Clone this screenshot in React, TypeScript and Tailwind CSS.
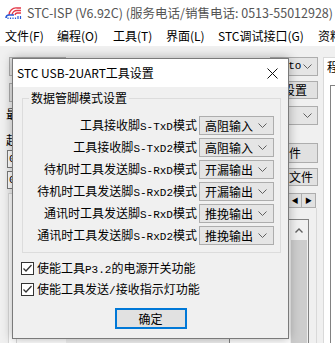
import React from "react";

const cjk = "font-['Noto_Sans_CJK_SC',sans-serif]";
const mono = "font-['Liberation_Mono',monospace] text-[11px]";

const rows = [
  { a: "工具接收脚", b: "S-TxD", c: "模式", v: "高阻输入" },
  { a: "工具接收脚", b: "S-TxD2", c: "模式", v: "高阻输入" },
  { a: "待机时工具发送脚", b: "S-RxD", c: "模式", v: "开漏输出" },
  { a: "待机时工具发送脚", b: "S-RxD2", c: "模式", v: "开漏输出" },
  { a: "通讯时工具发送脚", b: "S-RxD", c: "模式", v: "推挽输出" },
  { a: "通讯时工具发送脚", b: "S-RxD2", c: "模式", v: "推挽输出" },
];

const menus = [
  { t: "文件(F)", w: "w-[52px]" },
  { t: "编程(O)", w: "w-[56px]" },
  { t: "工具(T)", w: "w-[53px]" },
  { t: "界面(L)", w: "w-[52px]" },
  { t: "STC调试接口(G)", w: "w-[100px]" },
  { t: "资料", w: "w-[40px]" },
];

const Chevron = () => (
  <svg width="9" height="6" viewBox="0 0 9 6" className="shrink-0">
    <polyline points="0.5,0.5 4.5,4.5 8.5,0.5" fill="none" stroke="#606060" strokeWidth="1" />
  </svg>
);

const Check = () => (
  <div className="flex h-[13px] w-[13px] shrink-0 items-center justify-center border border-[#333] bg-white">
    <svg width="11" height="11" viewBox="0 0 11 11">
      <polyline points="1.5,5.5 4,8 9.5,2" fill="none" stroke="#333" strokeWidth="1.3" />
    </svg>
  </div>
);

const Logo = () => (
  <svg width="18" height="14" viewBox="0 0 18 14">
    <path d="M4 9 A7 7 0 0 1 12 2" fill="none" stroke="#e43a4a" strokeWidth="1.4" />
    <path d="M7 9 A5 5 0 0 1 12 4.5" fill="none" stroke="#e43a4a" strokeWidth="1.4" />
    <path d="M10 9 A2.5 2.5 0 0 1 12 7" fill="none" stroke="#e43a4a" strokeWidth="1.4" />
    <path d="M12 2 L16 2 M12 4.5 L16 4.5 M12 7 L16 7" stroke="#e43a4a" strokeWidth="1.4" />
    <path d="M1 12 Q1 9 4 9 L9 9" fill="none" stroke="#2a5bd7" strokeWidth="1.6" />
    <path d="M3 13 L3 11.5 M5.5 13 L5.5 11.5 M8 13 L8 11.5 M10.5 13 L10.5 11.5 M13 13 L13 10 M15.5 13 L15.5 10" stroke="#2a5bd7" strokeWidth="1.2" />
  </svg>
);

const MainCombo = ({ text, w }: { text?: string; w: string }) => (
  <div className={`flex h-[19px] ${w} items-center justify-between border border-[#adadad] bg-[#e5e5e5] pl-[4px] pr-[5px] text-[12px]`}>
    <span className={mono}>{text}</span>
    <Chevron />
  </div>
);

const Btn = ({ text, w, h }: { text: string; w: string; h: string }) => (
  <div className={`flex ${h} ${w} items-center justify-center border border-[#adadad] bg-[#e1e1e1] text-[12px]`}>
    {text}
  </div>
);

export default function App() {
  return (
    <div className={`relative h-[343px] w-[335px] overflow-hidden bg-[#f0f0f0] text-black ${cjk}`}>
      {/* main window title */}
      <div className="flex h-[26px] items-center whitespace-nowrap bg-white pl-[5px]">
        <Logo />
        <span className="ml-[4px] text-[12.5px] text-[#555]">
          STC-ISP (V6.92C) (服务电话/销售电话: 0513-55012928)
        </span>
      </div>
      {/* menu bar */}
      <div className="flex h-[20px] items-center whitespace-nowrap bg-white pl-[5px] text-[12px]">
        {menus.map((m) => (
          <span key={m.t} className={`${m.w} shrink-0`}>
            {m.t}
          </span>
        ))}
      </div>

      {/* client area */}
      <div className="flex h-[297px] pt-[11px]">
        <div className="ml-[6px] flex w-[60px] shrink-0 flex-col text-[12px]">
          <div className="ml-[3px]">
            <MainCombo w="w-[57px]" />
          </div>
          <div className="ml-[3px] mt-[7px]">
            <MainCombo w="w-[57px]" />
          </div>
          <div className="mt-[4px] h-[16px] leading-[16px]">最低波特率</div>
          <div className="mt-[10px] h-[16px] leading-[16px]">起始地址</div>
          <div className={`ml-[1px] mt-[2px] flex h-[18px] items-center border border-[#7a7a7a] bg-white pl-[1px] ${mono}`}>0x0000</div>
          <div className={`ml-[1px] mt-[3px] flex h-[18px] items-center border border-[#7a7a7a] bg-white pl-[1px] ${mono}`}>0x0000</div>
          <div className="ml-[2px] mt-[4px] flex flex-1 flex-col border-l border-t border-[#d9d9d9] bg-white pl-[7px]">
            <div className="mt-[8px] flex-1 border-l border-[#d9d9d9]">
              <div className="mt-[138px] flex items-center gap-[4px] pl-[3px]">
                <div className="h-[13px] w-[13px] shrink-0 border border-[#333] bg-white" />
                <span>在下次冷启动时</span>
              </div>
            </div>
          </div>
        </div>

        <div className="flex-1" />

        {/* right column */}
        <div className="flex w-[106px] shrink-0 flex-col items-end">
          <MainCombo text="Auto" w="w-[48px]" />
          <div className="mt-[5px]">
            <Btn text="设置" w="w-[46px]" h="h-[18px]" />
          </div>
          <div className="mt-[7px]">
            <MainCombo w="w-[48px]" />
          </div>
          <div className="mt-[18px]">
            <Btn text="打开程序文件" w="w-[106px]" h="h-[20px]" />
          </div>
          <div className="mt-[5px]">
            <Btn text="打开EEPROM文件" w="w-[106px]" h="h-[18px]" />
          </div>
          <div className="mr-[2px] mt-[7px] flex">
            <div className="flex h-[15px] w-[14px] items-center justify-center border border-[#adadad] bg-[#e1e1e1] text-[7px] leading-none">◀</div>
            <div className="flex h-[15px] w-[14px] items-center justify-center border border-l-0 border-[#adadad] bg-[#e1e1e1] text-[7px] leading-none">▶</div>
          </div>
          <div className="mr-[1px] flex w-full flex-1 flex-col items-end border-r border-[#d9d9d9]">
            <div className="mr-[7px] mt-[11px] flex w-[80px] flex-1 justify-end border border-b-0 border-[#828282] bg-white">
              <div className="flex w-[18px] flex-col bg-[#f0f0f0]">
                <div className="flex h-[20px] items-center justify-center">
                  <svg width="8" height="5" viewBox="0 0 8 5">
                    <polyline points="0.5,4.5 4,1 7.5,4.5" fill="none" stroke="#606060" strokeWidth="1.4" />
                  </svg>
                </div>
                <div className="mx-[1px] flex-1 bg-[#cdcdcd]" />
              </div>
            </div>
          </div>
        </div>

        {/* far right tab panel */}
        <div className="ml-[5px] flex w-[12px] shrink-0 flex-col overflow-hidden border-l border-t border-[#d9d9d9] bg-white">
          <div className="h-[18px] whitespace-nowrap pl-[3px] text-[12px] leading-[18px]">程序文件</div>
          <div className="ml-[6px] mt-[9px] flex-1 border-l border-t border-[#828282]" />
        </div>
      </div>

      {/* dialog */}
      <div className="absolute left-[12px] top-[58px] flex h-[281px] w-[277px] flex-col border border-[#7a7a7a] bg-[#f0f0f0] shadow-[0_0_10px_rgba(0,0,0,0.3)]">
        <div className="flex h-[28px] shrink-0 items-center justify-between bg-white pl-[4px] pr-[10px]">
          <span className="whitespace-nowrap text-[12px]">STC USB-2UART工具设置</span>
          <svg width="11" height="11" viewBox="0 0 11 11">
            <path d="M0.5 0.5 L10.5 10.5 M10.5 0.5 L0.5 10.5" stroke="#111" strokeWidth="1" />
          </svg>
        </div>
        <div className="flex flex-1 flex-col pt-[3px] text-[12px]">
          <fieldset className="ml-[9px] mr-[7px] border border-[#dcdcdc] pb-[7px] pr-[6px]">
            <legend className="ml-[6px] px-[2px] leading-[16px]">数据管脚模式设置</legend>
            <div className="mt-[10px] flex flex-col gap-[3px]">
              {rows.map((r, i) => (
                <div key={i} className="flex h-[19px] items-center justify-end gap-[2px]">
                  <span className="whitespace-nowrap leading-[19px]">
                    {r.a}
                    <span className={mono}>{r.b}</span>
                    {r.c}
                  </span>
                  <div className="flex h-[19px] w-[75px] shrink-0 items-center justify-between border border-[#adadad] bg-[#e5e5e5] pl-[5px] pr-[6px]">
                    <span>{r.v}</span>
                    <Chevron />
                  </div>
                </div>
              ))}
            </div>
          </fieldset>
          <div className="ml-[8px] mt-[9px] flex flex-col gap-[8px]">
            <div className="flex h-[13px] items-center gap-[3px]">
              <Check />
              <span className="whitespace-nowrap leading-[13px]">
                使能工具<span className={mono}>P3.2</span>的电源开关功能
              </span>
            </div>
            <div className="flex h-[13px] items-center gap-[3px]">
              <Check />
              <span className="whitespace-nowrap leading-[13px]">
                使能工具发送<span className={mono}>/</span>接收指示灯功能
              </span>
            </div>
          </div>
          <div className="mt-[12px] flex justify-center">
            <div className="flex h-[21px] w-[72px] items-center justify-center border-2 border-[#0078d7] bg-[#e1e1e1]">
              确定
            </div>
          </div>
        </div>
      </div>
    </div>
  );
}
